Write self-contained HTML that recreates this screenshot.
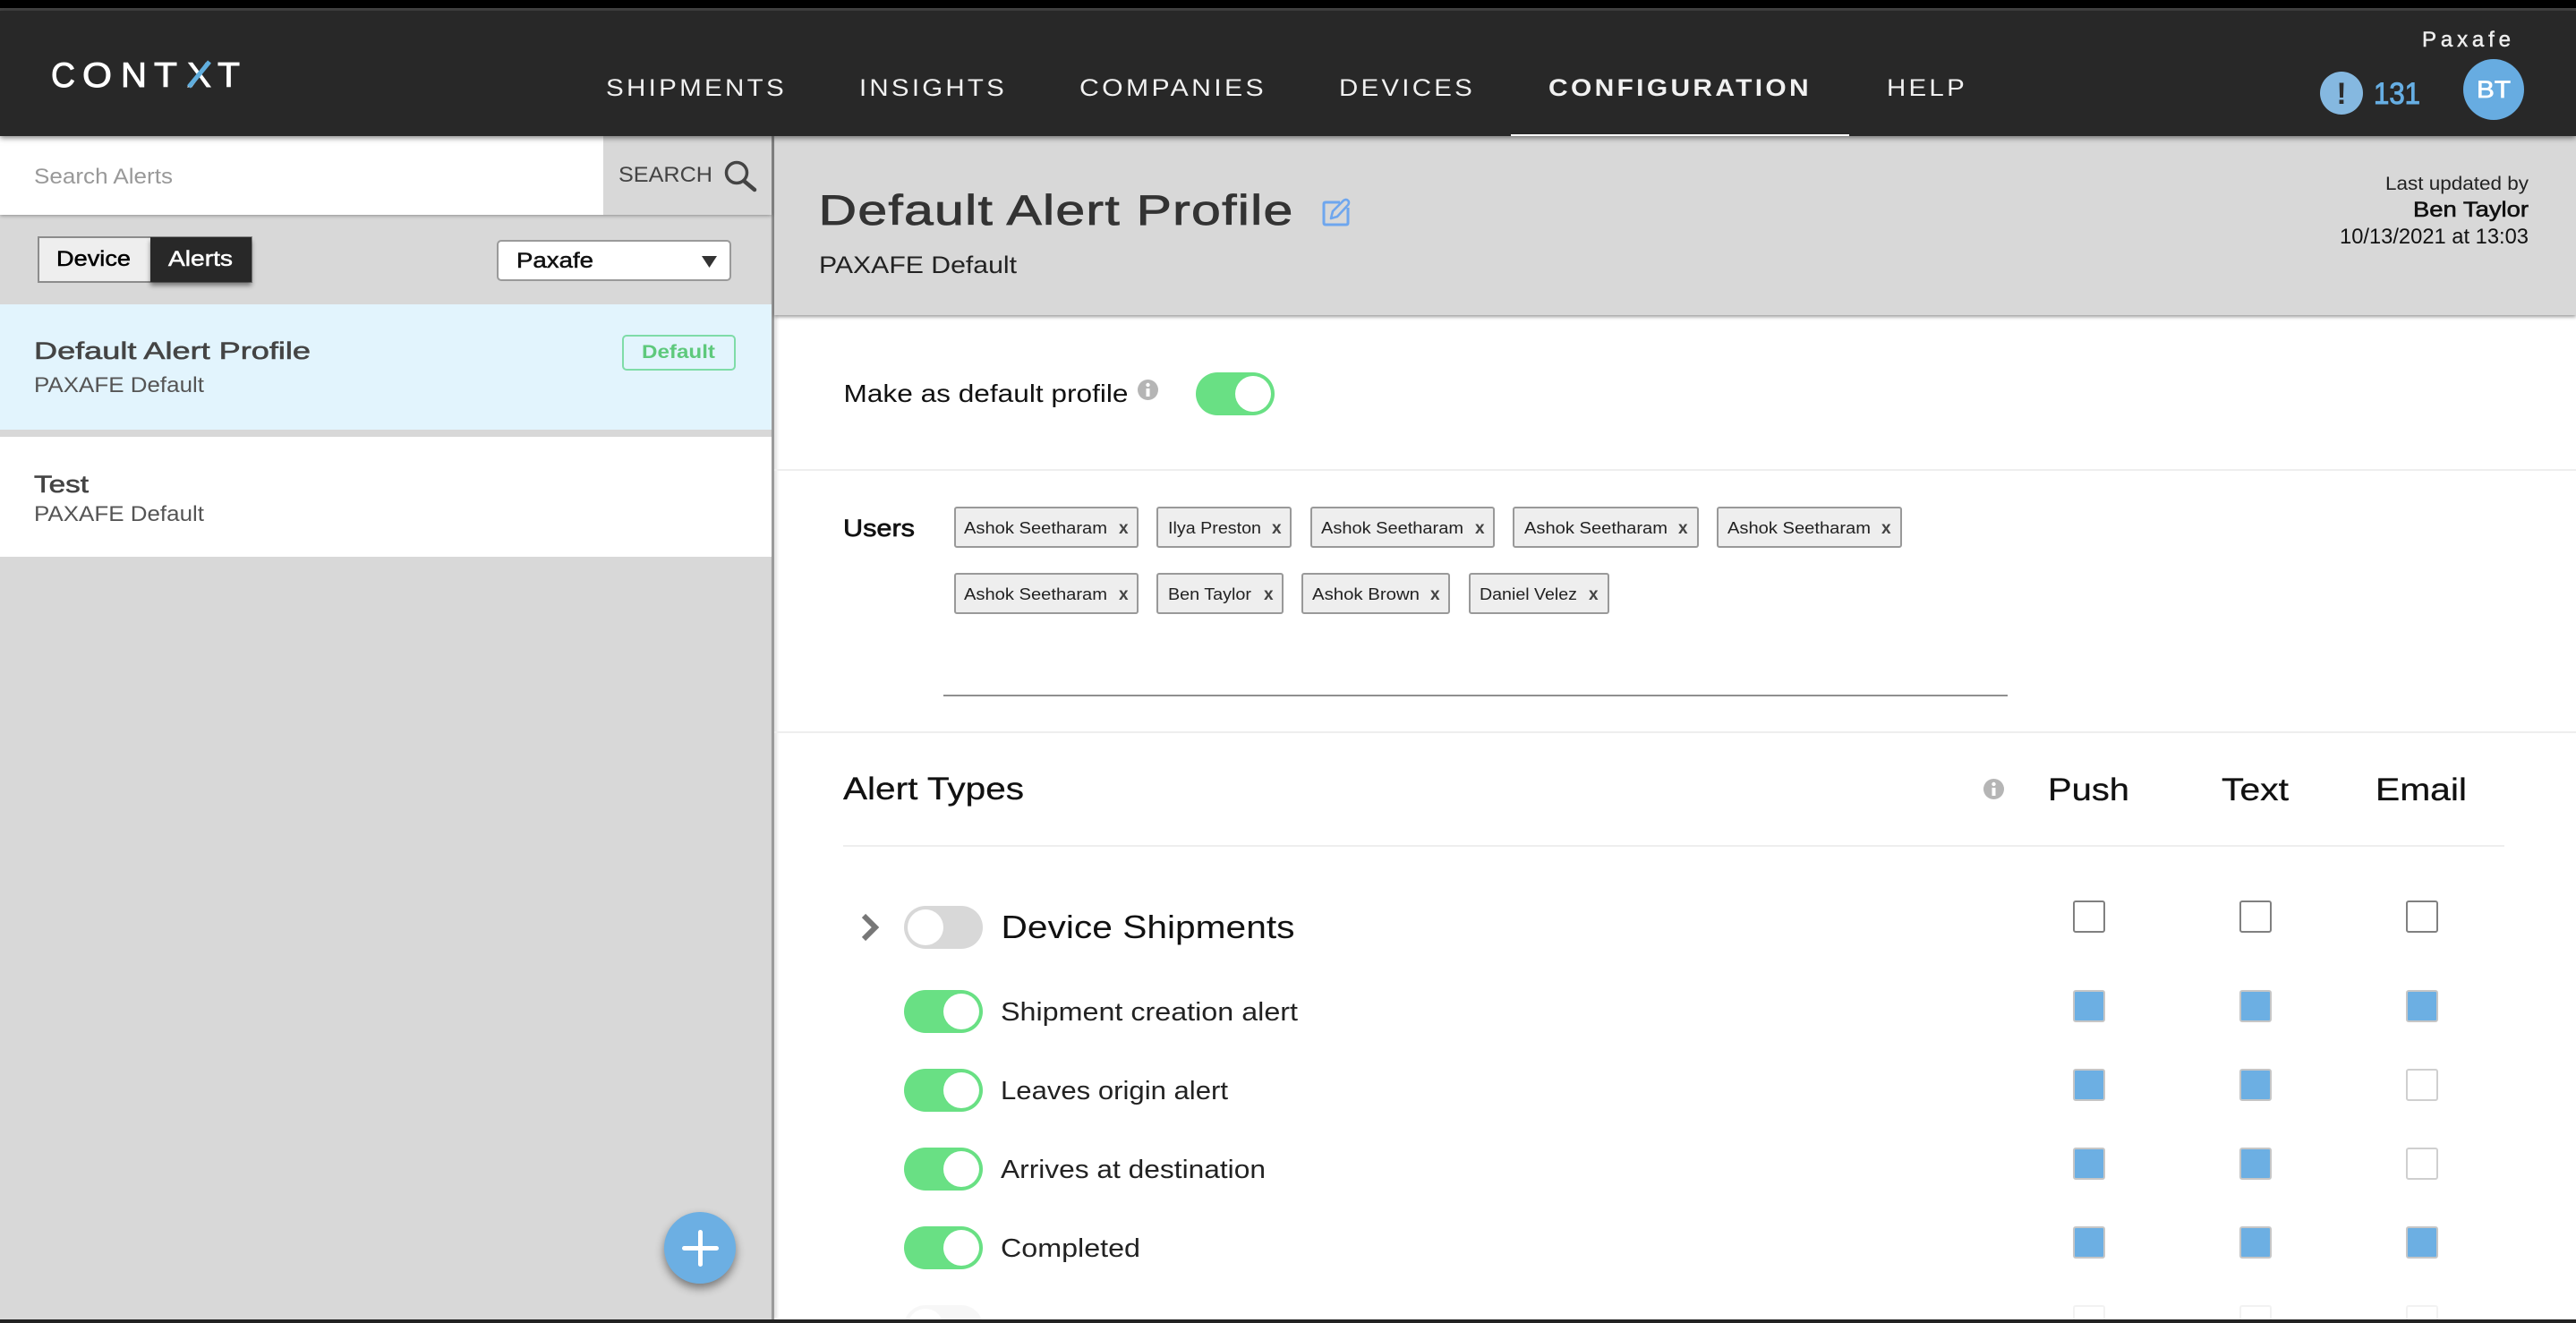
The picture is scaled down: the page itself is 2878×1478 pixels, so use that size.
<!DOCTYPE html>
<html lang="en">
<head>
<meta charset="utf-8">
<title>Default Alert Profile</title>
<style>
html,body{margin:0;padding:0;background:#fff;width:2878px;height:1478px;overflow:hidden}
#app{position:relative;width:2878px;height:1478px;overflow:hidden;font-family:"Liberation Sans",sans-serif}
.b{position:absolute;box-sizing:border-box}
svg{position:absolute;left:0;top:0}
text{font-family:"Liberation Sans",sans-serif}
.cb{position:absolute;box-sizing:border-box;width:36px;height:36px;border-radius:3px}
.on{background:#6cafe3;border:2px solid #c6c6c6}
.off{background:#fff;border:2px solid #cfcfcf}
.hd{background:#fff;border:2px solid #808080}
.tg{position:absolute;width:88px;height:48px;border-radius:24px;background:#69e084}
.tg i{position:absolute;top:4px;left:44px;width:40px;height:40px;border-radius:50%;background:#fff}
.tg.o{background:#d8d8d8}
.tg.o i{left:4px}
.ch{position:absolute;box-sizing:border-box;height:46px;background:#eee;border:2px solid #999;border-radius:3px}
</style>
</head>
<body>
<div id="app">
<!-- page backgrounds -->
<div class="b" style="left:0;top:152px;width:865px;height:1322px;background:#d8d8d8"></div>
<div class="b" style="left:862px;top:152px;width:3px;height:1322px;background:#9a9a9a;box-shadow:2px 0 4px rgba(0,0,0,.2)"></div>
<div class="b" style="left:865px;top:152px;width:2013px;height:200px;background:#d8d8d8;box-shadow:0 2px 4px rgba(0,0,0,.4)"></div>
<div class="b" style="left:865px;top:524px;width:2013px;height:2px;background:#eee"></div>
<div class="b" style="left:865px;top:817px;width:2013px;height:2px;background:#eee"></div>
<div class="b" style="left:942px;top:944px;width:1856px;height:2px;background:#eee"></div>
<div class="b" style="left:1054px;top:776px;width:1189px;height:2px;background:#8f8f8f"></div>

<!-- sidebar -->
<div class="b" style="left:0;top:152px;width:862px;height:88px;background:#fff;box-shadow:0 1px 4px rgba(0,0,0,.35)"></div>
<div class="b" style="left:674px;top:152px;width:188px;height:88px;background:#d8d8d8"></div>
<div class="b" style="left:42px;top:264px;width:240px;height:52px;background:#eee;border:2px solid #8c8c8c"></div>
<div class="b" style="left:168px;top:265px;width:113px;height:50px;background:#282828;box-shadow:0 4px 5px rgba(0,0,0,.45)"></div>
<div class="b" style="left:555px;top:268px;width:262px;height:46px;background:#fff;border:2px solid #9a9a9a;border-radius:5px"></div>
<div class="b" style="left:0;top:340px;width:862px;height:140px;background:#e2f4fd"></div>
<div class="b" style="left:0;top:488px;width:862px;height:134px;background:#fff"></div>
<div class="b" style="left:695px;top:374px;width:127px;height:40px;border:2px solid #7fdca8;border-radius:5px"></div>
<div class="b" style="left:742px;top:1354px;width:80px;height:80px;border-radius:50%;background:#6cafe3;box-shadow:0 5px 10px rgba(0,0,0,.45)"></div>
<div class="b" style="left:762px;top:1392px;width:41px;height:5px;border-radius:3px;background:#fff"></div>
<div class="b" style="left:780px;top:1374px;width:5px;height:41px;border-radius:3px;background:#fff"></div>

<!-- header -->
<div class="b" style="left:0;top:0;width:2878px;height:9px;background:#000"></div>
<div class="b" style="left:0;top:9px;width:2878px;height:3px;background:#444"></div>
<div class="b" style="left:0;top:12px;width:2878px;height:140px;background:#282828;box-shadow:0 2px 6px rgba(0,0,0,.5)"></div>
<div class="b" style="left:1688px;top:150px;width:378px;height:2px;background:#fff"></div>
<div class="b" style="left:2592px;top:80px;width:48px;height:48px;border-radius:50%;background:#85b8e0"></div>
<div class="b" style="left:2752px;top:66px;width:68px;height:68px;border-radius:50%;background:#67ace1"></div>

<!-- chips -->
<div class="ch" style="left:1066px;top:566px;width:206px"></div>
<div class="ch" style="left:1292px;top:566px;width:151px"></div>
<div class="ch" style="left:1464px;top:566px;width:206px"></div>
<div class="ch" style="left:1690px;top:566px;width:208px"></div>
<div class="ch" style="left:1918px;top:566px;width:207px"></div>
<div class="ch" style="left:1066px;top:640px;width:206px"></div>
<div class="ch" style="left:1292px;top:640px;width:142px"></div>
<div class="ch" style="left:1454px;top:640px;width:166px"></div>
<div class="ch" style="left:1641px;top:640px;width:157px"></div>

<!-- toggles -->
<div class="tg" style="left:1336px;top:416px"><i></i></div>
<div class="tg o" style="left:1010px;top:1012px"><i></i></div>
<div class="tg" style="left:1010px;top:1106px"><i></i></div>
<div class="tg" style="left:1010px;top:1194px"><i></i></div>
<div class="tg" style="left:1010px;top:1282px"><i></i></div>
<div class="tg" style="left:1010px;top:1370px"><i></i></div>
<div class="tg o" style="left:1010px;top:1458px;opacity:.2"><i></i></div>

<!-- checkboxes -->
<div class="cb hd" style="left:2316px;top:1006px"></div>
<div class="cb hd" style="left:2502px;top:1006px"></div>
<div class="cb hd" style="left:2688px;top:1006px"></div>
<div class="cb on" style="left:2316px;top:1106px"></div>
<div class="cb on" style="left:2502px;top:1106px"></div>
<div class="cb on" style="left:2688px;top:1106px"></div>
<div class="cb on" style="left:2316px;top:1194px"></div>
<div class="cb on" style="left:2502px;top:1194px"></div>
<div class="cb off" style="left:2688px;top:1194px"></div>
<div class="cb on" style="left:2316px;top:1282px"></div>
<div class="cb on" style="left:2502px;top:1282px"></div>
<div class="cb off" style="left:2688px;top:1282px"></div>
<div class="cb on" style="left:2316px;top:1370px"></div>
<div class="cb on" style="left:2502px;top:1370px"></div>
<div class="cb on" style="left:2688px;top:1370px"></div>
<div class="cb off" style="left:2316px;top:1458px;opacity:.25"></div>
<div class="cb off" style="left:2502px;top:1458px;opacity:.25"></div>
<div class="cb off" style="left:2688px;top:1458px;opacity:.25"></div>

<div class="b" style="left:0;top:1474px;width:2878px;height:4px;background:#222"></div>

<svg width="2878" height="1478" viewBox="0 0 2878 1478" xmlns="http://www.w3.org/2000/svg">
<!-- logo -->
<g font-size="39" fill="#fff" stroke="#fff" stroke-width=".9">
<text x="57" y="97" textLength="27" lengthAdjust="spacingAndGlyphs">C</text>
<text x="92" y="97" textLength="33" lengthAdjust="spacingAndGlyphs">O</text>
<text x="135" y="97" textLength="29" lengthAdjust="spacingAndGlyphs">N</text>
<text x="172" y="97" textLength="26" lengthAdjust="spacingAndGlyphs">T</text>
<text x="209" y="97" textLength="27" lengthAdjust="spacingAndGlyphs">X</text>
<text x="243" y="97" textLength="25" lengthAdjust="spacingAndGlyphs">T</text>
</g>
<path d="M211 97 L234 69" stroke="#60aede" stroke-width="5"/>

<!-- nav -->
<g font-size="27" fill="#f1f1f1" letter-spacing="3">
<text x="677" y="107" textLength="202" lengthAdjust="spacingAndGlyphs">SHIPMENTS</text>
<text x="960" y="107" textLength="165" lengthAdjust="spacingAndGlyphs">INSIGHTS</text>
<text x="1206" y="107" textLength="209" lengthAdjust="spacingAndGlyphs">COMPANIES</text>
<text x="1496" y="107" textLength="152" lengthAdjust="spacingAndGlyphs">DEVICES</text>
<text x="1730" y="107" textLength="294" lengthAdjust="spacingAndGlyphs" font-weight="700">CONFIGURATION</text>
<text x="2108" y="107" textLength="90" lengthAdjust="spacingAndGlyphs">HELP</text>
</g>
<text x="2706" y="52" font-size="24" fill="#eee" stroke="#eee" stroke-width=".5" textLength="99" lengthAdjust="spacing">Paxafe</text>
<text x="2616" y="116" font-size="34" font-weight="700" fill="#2c2c2c" text-anchor="middle">!</text>
<text x="2652" y="116" font-size="34" fill="#66aee3" stroke="#66aee3" stroke-width="1" textLength="52" lengthAdjust="spacingAndGlyphs">131</text>
<text x="2767" y="109" font-size="27" fill="#fff" stroke="#fff" stroke-width=".7" textLength="38" lengthAdjust="spacingAndGlyphs">BT</text>

<!-- sidebar text -->
<text x="38" y="205" font-size="24" fill="#999" textLength="155" lengthAdjust="spacingAndGlyphs">Search Alerts</text>
<text x="691" y="203" font-size="24" fill="#444" textLength="105" lengthAdjust="spacingAndGlyphs">SEARCH</text>
<circle cx="823" cy="193" r="11.500" fill="none" stroke="#444" stroke-width="3.500"/>
<path d="M831 202 L843 212" stroke="#444" stroke-width="4.500" stroke-linecap="round"/>
<text x="63" y="297" font-size="24" fill="#000" stroke="#000" stroke-width=".5" textLength="83" lengthAdjust="spacingAndGlyphs">Device</text>
<text x="188" y="297" font-size="24" fill="#fff" stroke="#fff" stroke-width=".5" textLength="72" lengthAdjust="spacingAndGlyphs">Alerts</text>
<text x="577" y="299" font-size="24" fill="#111" stroke="#111" stroke-width=".5" textLength="86" lengthAdjust="spacingAndGlyphs">Paxafe</text>
<path d="M784 286 H801 L792.500 299 Z" fill="#333"/>
<text x="38" y="401" font-size="27" fill="#444" stroke="#444" stroke-width=".6" textLength="309" lengthAdjust="spacingAndGlyphs">Default Alert Profile</text>
<text x="38" y="438" font-size="24" fill="#555" textLength="190" lengthAdjust="spacingAndGlyphs">PAXAFE Default</text>
<text x="717" y="400" font-size="21" font-weight="700" fill="#5ec97c" textLength="82" lengthAdjust="spacingAndGlyphs">Default</text>
<text x="38" y="550" font-size="27" fill="#444" stroke="#444" stroke-width=".6" textLength="61" lengthAdjust="spacingAndGlyphs">Test</text>
<text x="38" y="582" font-size="24" fill="#555" textLength="190" lengthAdjust="spacingAndGlyphs">PAXAFE Default</text>

<!-- main header -->
<text x="914.500" y="251" font-size="47" fill="#333" letter-spacing="1" stroke="#333" stroke-width=".8" textLength="531" lengthAdjust="spacingAndGlyphs">Default Alert Profile</text>
<path d="M1497 226 H1481 Q1479 226 1479 228 V249 Q1479 251 1481 251 H1504 Q1506 251 1506 249 V232" fill="none" stroke="#6ea6ee" stroke-width="3"/>
<path d="M1487 244 L1489 236 L1501 224 Q1504 222 1506 224 Q1508 226 1506 229 L1494 242 Z" fill="none" stroke="#6ea6ee" stroke-width="2.600" stroke-linejoin="round"/>
<text x="915" y="305" font-size="27" fill="#222" textLength="221" lengthAdjust="spacingAndGlyphs">PAXAFE Default</text>
<text x="2825" y="212" font-size="21" fill="#222" text-anchor="end" textLength="160" lengthAdjust="spacingAndGlyphs">Last updated by</text>
<text x="2825" y="242" font-size="24" fill="#111" stroke="#111" stroke-width=".6" text-anchor="end" textLength="129" lengthAdjust="spacingAndGlyphs">Ben Taylor</text>
<text x="2825" y="272" font-size="24" fill="#111" text-anchor="end" textLength="211" lengthAdjust="spacingAndGlyphs">10/13/2021 at 13:03</text>

<text x="942.500" y="449" font-size="28" fill="#111" textLength="318" lengthAdjust="spacingAndGlyphs">Make as default profile</text>
<circle cx="1282.500" cy="435.500" r="11.500" fill="#b5b5b5"/>
<rect x="1280.500" y="434" width="4" height="9" fill="#fff"/><circle cx="1282.500" cy="430" r="2.200" fill="#fff"/>

<text x="942" y="599" font-size="27" fill="#111" stroke="#111" stroke-width=".7" textLength="80" lengthAdjust="spacingAndGlyphs">Users</text>

<!-- chip text -->
<g font-size="18" fill="#222">
<text x="1077" y="596" textLength="160" lengthAdjust="spacingAndGlyphs">Ashok Seetharam</text>
<text x="1305" y="596" textLength="104" lengthAdjust="spacingAndGlyphs">Ilya Preston</text>
<text x="1476" y="596" textLength="159" lengthAdjust="spacingAndGlyphs">Ashok Seetharam</text>
<text x="1703" y="596" textLength="160" lengthAdjust="spacingAndGlyphs">Ashok Seetharam</text>
<text x="1930" y="596" textLength="160" lengthAdjust="spacingAndGlyphs">Ashok Seetharam</text>
<text x="1077" y="670" textLength="160" lengthAdjust="spacingAndGlyphs">Ashok Seetharam</text>
<text x="1305" y="670" textLength="93" lengthAdjust="spacingAndGlyphs">Ben Taylor</text>
<text x="1466" y="670" textLength="120" lengthAdjust="spacingAndGlyphs">Ashok Brown</text>
<text x="1653" y="670" textLength="109" lengthAdjust="spacingAndGlyphs">Daniel Velez</text>
</g>
<g font-size="19" font-weight="700" fill="#444">
<text x="1250" y="596">x</text><text x="1421" y="596">x</text><text x="1648" y="596">x</text><text x="1875" y="596">x</text><text x="2102" y="596">x</text>
<text x="1250" y="670">x</text><text x="1412" y="670">x</text><text x="1598" y="670">x</text><text x="1775" y="670">x</text>
</g>

<!-- alert types -->
<text x="942" y="893" font-size="35" fill="#111" stroke="#111" stroke-width=".3" textLength="202" lengthAdjust="spacingAndGlyphs">Alert Types</text>
<circle cx="2227.500" cy="881.500" r="11.500" fill="#b5b5b5"/>
<rect x="2225.500" y="880" width="4" height="9" fill="#fff"/><circle cx="2227.500" cy="876" r="2.200" fill="#fff"/>
<text x="2288" y="894" font-size="35" fill="#111" stroke="#111" stroke-width=".3" textLength="91" lengthAdjust="spacingAndGlyphs">Push</text>
<text x="2482" y="894" font-size="35" fill="#111" stroke="#111" stroke-width=".3" textLength="75" lengthAdjust="spacingAndGlyphs">Text</text>
<text x="2654" y="894" font-size="35" fill="#111" stroke="#111" stroke-width=".3" textLength="102" lengthAdjust="spacingAndGlyphs">Email</text>

<path d="M965 1023 L978 1036 L965 1049" fill="none" stroke="#777" stroke-width="6"/>
<text x="1118.500" y="1048" font-size="36" fill="#111" textLength="328" lengthAdjust="spacingAndGlyphs">Device Shipments</text>
<text x="1118" y="1140" font-size="29" fill="#222" textLength="332" lengthAdjust="spacingAndGlyphs">Shipment creation alert</text>
<text x="1118" y="1228" font-size="29" fill="#222" textLength="254" lengthAdjust="spacingAndGlyphs">Leaves origin alert</text>
<text x="1118" y="1316" font-size="29" fill="#222" textLength="296" lengthAdjust="spacingAndGlyphs">Arrives at destination</text>
<text x="1118" y="1404" font-size="29" fill="#222" textLength="156" lengthAdjust="spacingAndGlyphs">Completed</text>
</svg>
</div>
</body>
</html>
